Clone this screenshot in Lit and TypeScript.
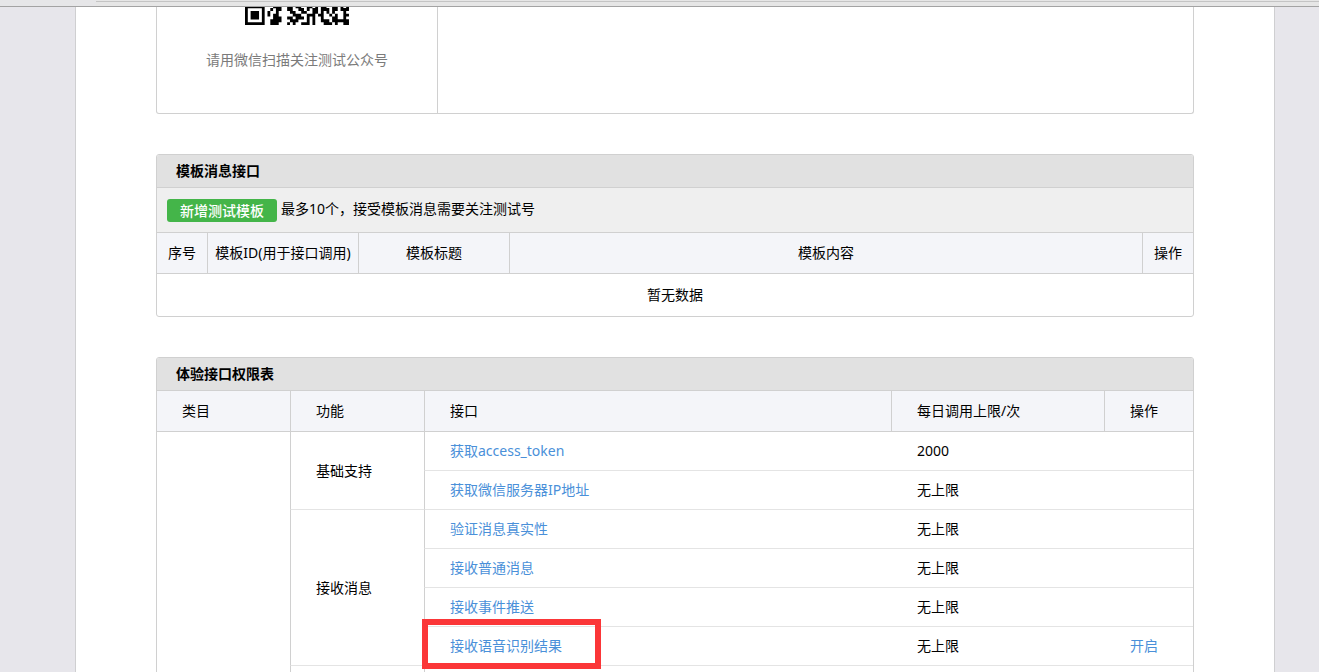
import { LitElement, html, css } from "lit";
import { customElement } from "lit/decorators.js";

const QR_ROWS = [
  "#######...###..##.##..##.#.##..##.#.#",
  "#.....#..#.##..##..##.#.##.###.##.###",
  "#.###.#.#..#....##..##..##.#.#.#...#.",
  "#.###.#.#.##.....###..###.##..#.#..##",
  "#.###.#...###..##.###.#.#..#...##..#.",
  "#.....#..####...###...#.#..###.######",
  "#######..###...#.#..###.#...###.#..##",
];

const QR_PATH = QR_ROWS.map((row, y) =>
  [...row.matchAll(/#+/g)]
    .map((run) => `M${run.index} ${y}h${run[0].length}v1.02h-${run[0].length}z`)
    .join("")
).join("");

interface Api {
  name: string;
  limit: string;
  action?: string;
  marked?: boolean;
}

const GROUPS: { feature: string; apis: Api[] }[] = [
  {
    feature: "基础支持",
    apis: [
      { name: "获取access_token", limit: "2000" },
      { name: "获取微信服务器IP地址", limit: "无上限" },
    ],
  },
  {
    feature: "接收消息",
    apis: [
      { name: "验证消息真实性", limit: "无上限" },
      { name: "接收普通消息", limit: "无上限" },
      { name: "接收事件推送", limit: "无上限" },
      { name: "接收语音识别结果", limit: "无上限", action: "开启", marked: true },
    ],
  },
];

@customElement("app-root")
export class AppRoot extends LitElement {
  static styles = css`
    :host {
      display: flex;
      flex-direction: column;
      height: 100vh;
      overflow: hidden;
      background: #e7e6eb;
      color: #000;
      font: 14px/22px "Noto Sans", "Noto Sans CJK SC", sans-serif;
    }
    * {
      box-sizing: border-box;
    }
    .chrome {
      flex: none;
      height: 7px;
      background: #e6e6e6;
      border-bottom: 1px solid #a3a3a3;
      display: flex;
    }
    .tab {
      width: 96px;
      background: #e6e6e8;
    }
    .bar {
      flex: 1;
      margin-top: 1px;
      border-top: 1px solid #c4c4c4;
    }
    .viewport {
      flex: 1;
      min-height: 0;
      overflow: hidden;
      padding: 0 44px 0 75px;
    }
    .page {
      display: flex;
      flex-direction: column;
      gap: 40px;
      min-height: 100%;
      padding: 0 80px;
      background: #fff;
      border: solid #cfcfd1;
      border-width: 0 1px;
    }
    .panel {
      border: 1px solid #d0d0d0;
      border-radius: 3px;
      overflow: hidden;
    }
    .account {
      display: flex;
      border-top: 0;
      border-radius: 0 0 3px 3px;
    }
    .follow {
      width: 281px;
      padding-bottom: 42px;
      border-right: 1px solid #d0d0d0;
      text-align: center;
      color: #7b7b7b;
    }
    .qr {
      display: block;
      width: 104px;
      height: 18px;
      margin: 0 auto 24px;
      fill: #000;
    }
    .hint {
      margin: 0;
    }
    .title {
      margin: 0;
      padding: 5px 19px;
      background: #e1e1e1;
      border-bottom: 1px solid #d0d0d0;
      font-size: 14px;
      font-weight: 700;
    }
    .tools {
      display: flex;
      align-items: flex-start;
      gap: 4px;
      padding: 10px;
      background: #efefef;
      border-bottom: 1px solid #d0d0d0;
    }
    .add {
      height: 23px;
      width: 110px;
      margin: 1px 0 0;
      padding: 0;
      border: 0;
      border-radius: 3px;
      background: #44b549;
      color: #fff;
      font: 14px/23px "Noto Sans", "Noto Sans CJK SC", sans-serif;
      font-weight: 500;
    }
    table {
      width: 100%;
      border-collapse: separate;
      border-spacing: 0;
      table-layout: fixed;
    }
    th {
      height: 41px;
      padding: 0;
      background: #f4f5f9;
      border-bottom: 1px solid #d0d0d0;
      font-weight: 400;
    }
    th + th {
      border-left: 1px solid #d0d0d0;
    }
    td {
      padding: 0;
    }
    .empty {
      height: 42px;
      text-align: center;
    }
    .narrow {
      width: 50px;
    }
    .mid {
      width: 151px;
    }
    .last {
      width: 51px;
    }
    .rights th,
    .rights td {
      padding-left: 25px;
      text-align: left;
    }
    .rights td {
      height: 39px;
      border-bottom: 1px solid #e4e4e4;
    }
    .rights .feature,
    .rights .api {
      border-left: 1px solid #d0d0d0;
    }
    .rights .limit,
    .rights .action {
      padding-left: 26px;
    }
    .first-col {
      width: 133px;
    }
    .feature-col {
      width: 134px;
    }
    .limit-col {
      width: 213px;
    }
    .action-col {
      width: 89px;
    }
    a {
      color: #4a90d9;
      text-decoration: none;
    }
    .api {
      position: relative;
    }
    .mark {
      position: absolute;
      z-index: 1;
      left: -3px;
      top: -8px;
      width: 179px;
      height: 50px;
      border: 6px solid #fb3638;
      pointer-events: none;
    }
  `;

  private rows() {
    return GROUPS.map((group, g) =>
      group.apis.map(
        (api, i) => html`<tr>
          ${g === 0 && i === 0 ? html`<td rowspan="7"></td>` : null}
          ${i === 0 ? html`<td class="feature" rowspan=${group.apis.length}>${group.feature}</td>` : null}
          <td class="api">
            <a href="#">${api.name}</a>
            ${api.marked ? html`<span class="mark"></span>` : null}
          </td>
          <td class="limit">${api.limit}</td>
          <td class="action">${api.action ? html`<a href="#">${api.action}</a>` : null}</td>
        </tr>`
      )
    );
  }

  render() {
    return html`
      <div class="chrome"><div class="tab"></div><div class="bar"></div></div>
      <div class="viewport">
        <main class="page">
          <section class="panel account">
            <div class="follow">
              <svg class="qr" viewBox="0 0 104 18" role="img" aria-label="二维码">
                <path transform="translate(0 -1.7) scale(2.81)" d=${QR_PATH}></path>
              </svg>
              <p class="hint">请用微信扫描关注测试公众号</p>
            </div>
          </section>

          <section class="panel">
            <h2 class="title">模板消息接口</h2>
            <div class="tools">
              <button class="add" type="button">新增测试模板</button>
              <span>最多10个，接受模板消息需要关注测试号</span>
            </div>
            <table>
              <thead>
                <tr>
                  <th class="narrow">序号</th>
                  <th class="mid">模板ID(用于接口调用)</th>
                  <th class="mid">模板标题</th>
                  <th>模板内容</th>
                  <th class="last">操作</th>
                </tr>
              </thead>
              <tbody>
                <tr><td class="empty" colspan="5">暂无数据</td></tr>
              </tbody>
            </table>
          </section>

          <section class="panel">
            <h2 class="title">体验接口权限表</h2>
            <table class="rights">
              <thead>
                <tr>
                  <th class="first-col">类目</th>
                  <th class="feature-col">功能</th>
                  <th>接口</th>
                  <th class="limit-col">每日调用上限/次</th>
                  <th class="action-col">操作</th>
                </tr>
              </thead>
              <tbody>
                ${this.rows()}
                <tr>
                  <td class="feature"></td>
                  <td class="api"></td>
                  <td></td>
                  <td></td>
                </tr>
              </tbody>
            </table>
          </section>
        </main>
      </div>
    `;
  }
}
